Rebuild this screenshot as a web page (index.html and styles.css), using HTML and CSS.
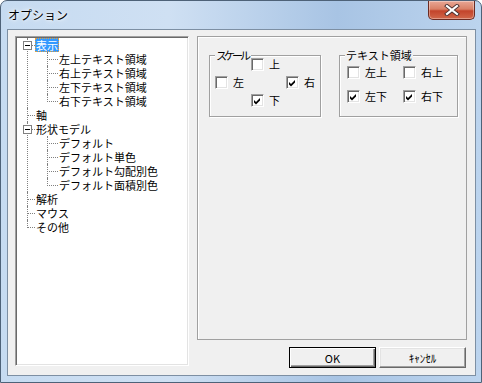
FILE: index.html
```html
<!DOCTYPE html>
<html lang="ja">
<head>
    <meta charset="UTF-8">
    <title>オプション</title>
    <link rel="stylesheet" href="styles.css">
</head>
<body>
    <div class="window">
        <div class="titlebar">
            <span class="title">オプション</span>
            <div class="close">
                <svg width="18" height="12" viewBox="0 0 18 12">
                    <path d="M4 2 L14 10 M14 2 L4 10" stroke="#4a3030" stroke-width="4" stroke-linecap="square"/>
                    <path d="M4 2 L14 10 M14 2 L4 10" stroke="#fff" stroke-width="2.2" stroke-linecap="square"/>
                </svg>
            </div>
        </div>

        <div class="client">
            <div class="tree">
                <ul class="root">
                    <li>
                        <span class="expander"></span>
                        <span class="label selected">表示</span>
                        <ul>
                            <li><span class="label">左上テキスト領域</span></li>
                            <li><span class="label">右上テキスト領域</span></li>
                            <li><span class="label">左下テキスト領域</span></li>
                            <li><span class="label">右下テキスト領域</span></li>
                        </ul>
                    </li>
                    <li><span class="label">軸</span></li>
                    <li>
                        <span class="expander"></span>
                        <span class="label">形状モデル</span>
                        <ul>
                            <li><span class="label">デフォルト</span></li>
                            <li><span class="label">デフォルト単色</span></li>
                            <li><span class="label">デフォルト勾配別色</span></li>
                            <li><span class="label">デフォルト面積別色</span></li>
                        </ul>
                    </li>
                    <li><span class="label">解析</span></li>
                    <li><span class="label">マウス</span></li>
                    <li><span class="label">その他</span></li>
                </ul>
            </div>

            <div class="side">
                <div class="panel">
                    <div class="group scale">
                        <div class="group-title narrow">スケール</div>
                        <div class="scale-grid">
                            <label class="check top"><span class="box"></span>上</label>
                            <label class="check left"><span class="box"></span>左</label>
                            <label class="check right"><span class="box"><svg width="11" height="11" viewBox="0 0 11 11"><path d="M2 4 L4 6 L8 2 L8 4.5 L4 8.5 L2 6.5 Z" fill="#000"/></svg></span>右</label>
                            <label class="check bottom"><span class="box"><svg width="11" height="11" viewBox="0 0 11 11"><path d="M2 4 L4 6 L8 2 L8 4.5 L4 8.5 L2 6.5 Z" fill="#000"/></svg></span>下</label>
                        </div>
                    </div>

                    <div class="group text-area">
                        <div class="group-title">テキスト領域</div>
                        <div class="text-grid">
                            <label class="check"><span class="box"></span>左上</label>
                            <label class="check"><span class="box"></span>右上</label>
                            <label class="check"><span class="box"><svg width="11" height="11" viewBox="0 0 11 11"><path d="M2 4 L4 6 L8 2 L8 4.5 L4 8.5 L2 6.5 Z" fill="#000"/></svg></span>左下</label>
                            <label class="check"><span class="box"><svg width="11" height="11" viewBox="0 0 11 11"><path d="M2 4 L4 6 L8 2 L8 4.5 L4 8.5 L2 6.5 Z" fill="#000"/></svg></span>右下</label>
                        </div>
                    </div>
                </div>

                <div class="buttons">
                    <button class="default">OK</button>
                    <button>ｷｬﾝｾﾙ</button>
                </div>
            </div>
        </div>
    </div>
</body>
</html>
```

FILE: styles.css
```css
body {
    margin: 0;
    padding: 0;
    background: #fff;
    font-family: "Noto Sans CJK JP", "Noto Sans", sans-serif;
    font-size: 11px;
    color: #000;
}

.window {
    width: 482px;
    height: 383px;
    box-sizing: border-box;
    border: 1px solid #4e6278;
    border-radius: 7px 7px 0 0;
    background: linear-gradient(to right, #c6dbf1 0%, #cfe0f3 35%, #a8c4e4 70%, #bcd4ee 100%);
}

.titlebar {
    height: 28px;
    display: flex;
    justify-content: space-between;
    align-items: flex-start;
}

.title {
    margin: 5px 0 0 7px;
    font-size: 12px;
    line-height: 18px;
    text-shadow: 0 0 6px #fff, 0 0 3px #fff;
}

.close {
    width: 45px;
    height: 18px;
    margin-right: 6px;
    border: 1px solid #6b2b22;
    border-top: none;
    border-radius: 0 0 5px 5px;
    background: linear-gradient(to bottom, #e8a795 0%, #d98066 45%, #c3442b 55%, #d1674a 100%);
    display: flex;
    justify-content: center;
    align-items: center;
    box-shadow: inset 0 0 0 1px rgba(255, 255, 255, 0.35);
}

.client {
    margin-left: 6px;
    width: 469px;
    height: 347px;
    box-sizing: border-box;
    border: 1px solid #7d8fa3;
    background: #f0f0f0;
    display: grid;
    grid-template-columns: 174px 270px;
    gap: 8px;
    padding: 6px 7px 7px 7px;
    align-items: start;
}

/* tree view */
.tree {
    height: 330px;
    box-sizing: border-box;
    background: #fff;
    border: 1px solid;
    border-color: #a0a0a0 #fff #fff #a0a0a0;
    box-shadow: inset 1px 1px 0 #696969, inset -1px -1px 0 #e3e3e3;
    padding: 1px 0 0 11px;
}

.tree ul {
    list-style: none;
    margin: 0;
    padding: 0;
}

.tree li {
    position: relative;
    padding-left: 8px;
    line-height: 14px;
}

.tree li::before {
    content: '';
    position: absolute;
    left: 0;
    top: 0;
    width: 7px;
    height: 7px;
    border-left: 1px dotted #808080;
    border-bottom: 1px dotted #808080;
}

.tree li:not(:last-child)::after {
    content: '';
    position: absolute;
    left: 0;
    top: 7px;
    bottom: 0;
    border-left: 1px dotted #808080;
}

.tree li ul {
    margin-left: 12px;
}

.tree li li {
    padding-left: 11px;
}

.tree li li::before {
    width: 10px;
}

.label {
    display: inline-block;
    height: 14px;
    line-height: 14px;
    padding: 0 1px;
    white-space: nowrap;
    vertical-align: top;
}

.label.selected {
    background: #3399ff;
    color: #fff;
    outline: 1px dotted #e0a040;
    outline-offset: -1px;
}

.expander {
    position: absolute;
    left: -4px;
    top: 3px;
    width: 9px;
    height: 9px;
    box-sizing: border-box;
    border: 1px solid #808080;
    background: #fff;
    z-index: 1;
}

.expander::after {
    content: '';
    position: absolute;
    left: 1px;
    top: 3px;
    width: 5px;
    height: 1px;
    background: #000;
}

/* right side */
.side {
    display: flex;
    flex-direction: column;
}

.panel {
    height: 304px;
    box-sizing: border-box;
    border: 1px solid #a0a0a0;
    box-shadow: inset 1px 1px 0 #fff;
    display: flex;
    align-items: flex-start;
    gap: 18px;
    padding: 18px 0 0 11px;
}

.group {
    height: 62px;
    box-sizing: border-box;
    border: 1px solid #a0a0a0;
    box-shadow: 1px 1px 0 #fff, inset 1px 1px 0 #fff;
}

.group.scale {
    width: 112px;
}

.group.text-area {
    width: 119px;
}

.group-title {
    width: fit-content;
    height: 14px;
    line-height: 14px;
    margin: -8px 0 -6px 5px;
    padding: 0 1px;
    background: #f0f0f0;
}

.group-title.narrow {
    letter-spacing: -3px;
    padding-right: 3px;
}

.check {
    display: flex;
    align-items: center;
    gap: 5px;
    height: 13px;
    line-height: 13px;
}

.box {
    width: 13px;
    height: 13px;
    box-sizing: border-box;
    border: 1px solid;
    border-color: #a0a0a0 #fff #fff #a0a0a0;
    box-shadow: inset 1px 1px 0 #696969, inset -1px -1px 0 #e3e3e3;
    background: #fff;
    flex: none;
}

.box svg {
    display: block;
    margin: 1px 0 0 0;
}

.scale-grid {
    display: grid;
    grid-template-columns: 36px 35px 1fr;
    grid-template-rows: 18px 18px 18px;
    padding: 2px 0 0 5px;
}

.scale-grid .top { grid-column: 2; grid-row: 1; }
.scale-grid .left { grid-column: 1; grid-row: 2; }
.scale-grid .right { grid-column: 3; grid-row: 2; }
.scale-grid .bottom { grid-column: 2; grid-row: 3; }

.text-grid {
    display: grid;
    grid-template-columns: 56px 1fr;
    grid-template-rows: 24px 24px;
    padding: 10px 0 0 7px;
}

.buttons {
    display: flex;
    justify-content: flex-end;
    gap: 3px;
    margin-top: 7px;
    padding-right: 1px;
}

button {
    width: 87px;
    height: 21px;
    box-sizing: border-box;
    font-family: "Noto Sans CJK JP", "Noto Sans", sans-serif;
    font-size: 11px;
    background: #f0f0f0;
    color: #000;
    border: 1px solid;
    border-color: #fff #696969 #696969 #fff;
    box-shadow: inset -1px -1px 0 #a0a0a0, inset 1px 1px 0 #e3e3e3;
    padding: 0;
}

button.default {
    border: 1px solid #000;
    box-shadow: inset 1px 1px 0 #fff, inset -1px -1px 0 #696969, inset -2px -2px 0 #a0a0a0;
}
```
